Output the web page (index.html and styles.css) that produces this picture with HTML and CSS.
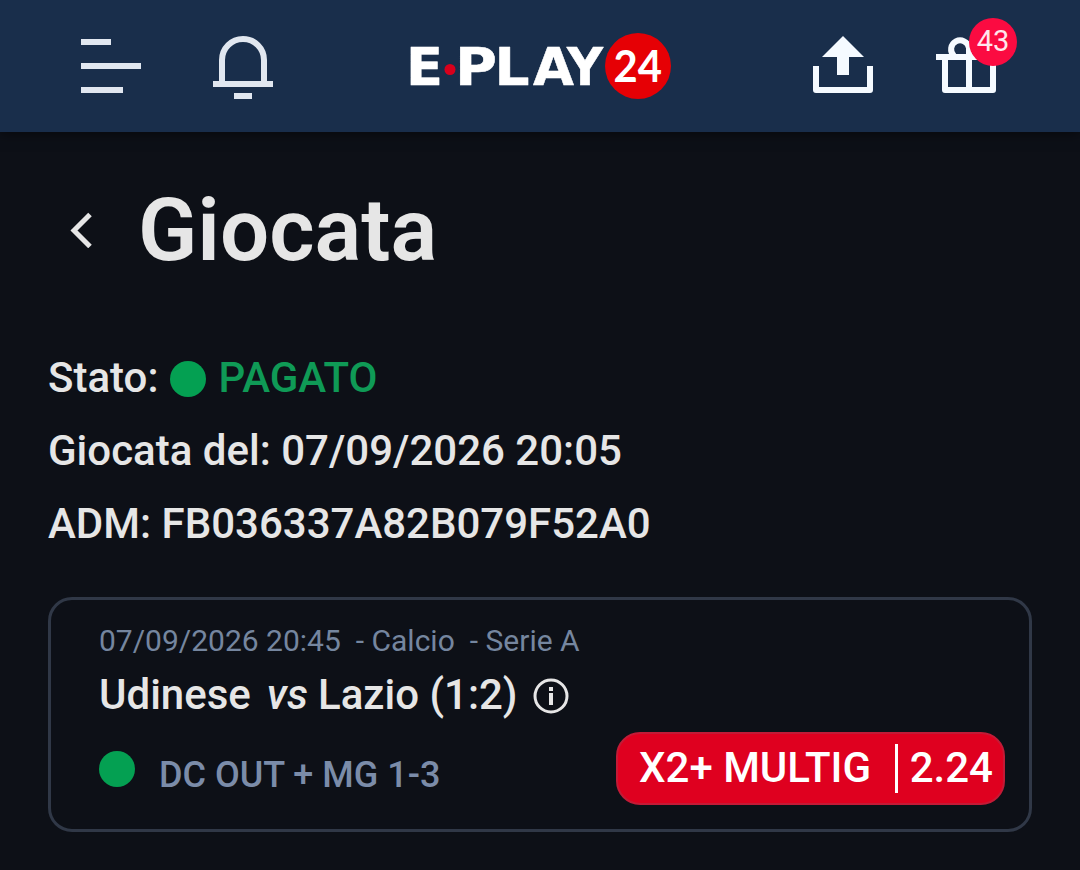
FILE: index.html
```html
<!DOCTYPE html>
<html lang="it">
<head>
  <meta charset="UTF-8" />
  <meta name="viewport" content="width=device-width, initial-scale=1.0" />
  <title>Giocata</title>
  <link rel="stylesheet" href="styles.css">
</head>
<body>

  <!-- Header -->
  <header class="header">
    <div class="header-left">
      <svg class="icon" viewBox="0 0 60 66" fill="#e1e7f0">
        <path d="M0 6h30v6H0zM0 30h60v6H0zM0 54h42v6H0z"/>
      </svg>
      <svg class="icon" viewBox="0 0 60 66" fill="#e1e7f0">
        <path d="M9 49V27a21 21 0 0 1 42 0v22" fill="none" stroke="#e1e7f0" stroke-width="6"/>
        <path d="M0 48h60v6H0zM21 60h18v6H21z"/>
      </svg>
    </div>

    <svg class="logo" viewBox="-4 0 276 72">
      <g class="logo-name">
        <text x="-3" y="54.700" textLength="37" lengthAdjust="spacingAndGlyphs">E</text>
        <text x="46" y="54.700" textLength="42" lengthAdjust="spacingAndGlyphs">P</text>
        <text x="85.500" y="54.700" textLength="35" lengthAdjust="spacingAndGlyphs">L</text>
        <text x="124" y="54.700" textLength="41" lengthAdjust="spacingAndGlyphs">A</text>
        <text x="158" y="54.700" textLength="36" lengthAdjust="spacingAndGlyphs">Y</text>
      </g>
      <circle cx="41" cy="39.500" r="5.500" fill="#d8001c"/>
      <circle cx="229" cy="36" r="33" fill="#e60005"/>
      <text class="logo-number" x="204.500" y="52" textLength="48.500" lengthAdjust="spacingAndGlyphs">24</text>
    </svg>

    <div class="header-right">
      <svg class="icon" viewBox="0 0 60 66" fill="#f5faff">
        <path d="M30 3l21 21H36v18H24V24H9z"/>
        <path d="M3 33v24h54V33" fill="none" stroke="#f5faff" stroke-width="6" stroke-linejoin="round"/>
      </svg>
      <div class="gift">
        <svg class="icon icon-gift" viewBox="0 0 66 66" fill="none" stroke="#f5faff" stroke-width="6">
          <path d="M0 24h66M33 24v33"/>
          <path d="M9 24v33h48V24" stroke-linejoin="round"/>
          <path d="M18 23a9 9 0 1 1 15-8a9 9 0 1 1 15 8M33 14v10"/>
        </svg>
        <span class="badge">43</span>
      </div>
    </div>
  </header>

  <!-- Title -->
  <div class="title">
    <svg class="back" viewBox="0 0 24 36">
      <path d="M21 2.500L5 18.500l16 16" fill="none" stroke="#e6e6e6" stroke-width="5"/>
    </svg>
    <h1>Giocata</h1>
  </div>

  <!-- Ticket info -->
  <div class="info">
    <div class="row">Stato: <span class="dot"></span><span class="paid">PAGATO</span></div>
    <div class="row">Giocata del: 07/09/2026 20:05</div>
    <div class="row">ADM: FB036337A82B079F52A0</div>
  </div>

  <!-- Event -->
  <div class="card">
    <div class="event-date">
      <span>07/09/2026 20:45</span>
      <span>- Calcio</span>
      <span>- Serie A</span>
    </div>
    <div class="match">
      <span>Udinese</span>
      <em>vs</em>
      <span>Lazio (1:2)</span>
      <svg class="info-icon" viewBox="0 0 36 36">
        <circle cx="18" cy="18" r="16" fill="none" stroke="#e6e6e6" stroke-width="3"/>
        <path d="M16 9h4v4h-4zM16 15h4v12h-4z" fill="#e6e6e6"/>
      </svg>
    </div>
    <div class="bet">
      <span class="dot"></span>
      <span class="market">DC OUT + MG 1-3</span>
      <div class="odds">
        <span class="pick">X2+ MULTIG</span>
        <span class="line"></span>
        <span class="quota">2.24</span>
      </div>
    </div>
  </div>

</body>
</html>
```
FILE: styles.css
```css
body {
  font-family: Roboto, sans-serif;
  margin: 0;
  background: #0d1017;
  color: #e6e6e6;
}

/* Header */
.header {
  display: flex;
  align-items: center;
  justify-content: space-between;
  height: 132px;
  padding: 0 78px 0 81px;
  box-sizing: border-box;
  background: #192e4b;
  box-shadow: 0 2px 12px rgba(0, 0, 0, 0.5);
}

.header-left {
  display: flex;
  gap: 72px;
}

.header-right {
  display: flex;
  gap: 63px;
}

.icon {
  display: block;
  width: 60px;
  height: 66px;
}

.icon-gift {
  width: 66px;
}

.logo {
  width: 276px;
  height: 72px;
}

.logo-name {
  font-family: "DejaVu Sans", sans-serif;
  font-size: 51px;
  font-weight: 700;
  fill: #fff;
  stroke: #fff;
  stroke-width: 0.5;
  stroke-linejoin: round;
}

.logo-number {
  font-family: Lato, sans-serif;
  font-size: 43px;
  font-weight: 700;
  fill: #fff;
}

.gift {
  position: relative;
}

.badge {
  position: absolute;
  top: -15px;
  right: -15px;
  width: 48px;
  height: 48px;
  border-radius: 50%;
  background: #fb0b41;
  color: #ffe6ec;
  font-size: 29px;
  line-height: 47px;
  text-align: center;
}

/* Title */
.title {
  display: flex;
  align-items: center;
  height: 120px;
  padding: 38px 0 0 69px;
}

.title h1 {
  margin: 0 0 0 45px;
  font-size: 87px;
  font-weight: 600;
  line-height: 120px;
}

.back {
  width: 24px;
  height: 36px;
}

/* Ticket info */
.info {
  padding: 51px 48px 0;
}

.row {
  display: flex;
  align-items: center;
  height: 73px;
  font-size: 42px;
  font-weight: 500;
}

.dot {
  flex: none;
  width: 36px;
  height: 36px;
  border-radius: 50%;
  background: #04a052;
}

.row .dot {
  margin: 3px 12px 0;
}

.paid {
  color: #0f9a56;
}

/* Event card */
.card {
  height: 235px;
  margin: 37px 48px 0;
  padding: 23px 24px 0 48px;
  box-sizing: border-box;
  border: 3px solid #303847;
  border-radius: 24px;
}

.event-date {
  display: flex;
  gap: 15px;
  font-size: 30px;
  line-height: 36px;
  color: #75869f;
}

.match {
  display: flex;
  align-items: center;
  height: 58px;
  margin-top: 6px;
  font-size: 42px;
  font-weight: 500;
}

.match em {
  margin: 0 10px 0 16px;
}

.info-icon {
  width: 36px;
  height: 36px;
  margin: 3px 0 0 15px;
}

.bet {
  display: flex;
  align-items: center;
  margin-top: 9px;
}

.market {
  margin-left: 24px;
  padding-top: 12px;
  font-size: 36px;
  font-weight: 500;
  color: #7b8ca9;
}

.odds {
  display: flex;
  align-items: center;
  width: 389px;
  height: 73px;
  margin-left: auto;
  padding: 0 10px 0 21px;
  box-sizing: border-box;
  border: 2px solid #c31a36;
  border-radius: 24px;
  background: #df001f;
  color: #fff;
  font-size: 42px;
  font-weight: 500;
}

.pick,
.quota {
  padding-bottom: 2px;
}

.line {
  width: 3px;
  height: 49px;
  margin-left: auto;
  background: #fff;
}

.quota {
  margin-left: 12px;
}
```
